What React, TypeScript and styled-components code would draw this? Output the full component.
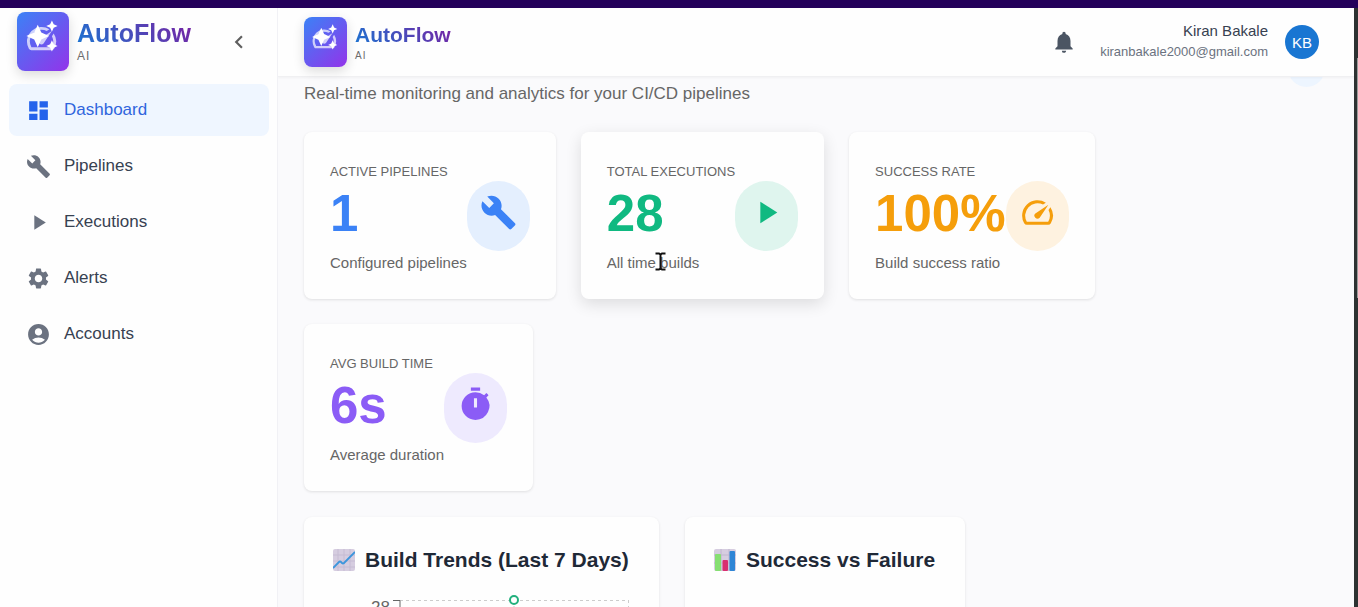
import React from "react";
import styled, { createGlobalStyle, css } from "styled-components";
import {
  MdAccountCircle,
  MdAutoAwesome,
  MdBuild,
  MdChevronLeft,
  MdDashboard,
  MdNotifications,
  MdPlayArrow,
  MdSettings,
  MdSpeed,
  MdTimer,
} from "react-icons/md";

const GlobalStyle = createGlobalStyle`
  *, *::before, *::after { box-sizing: border-box; }
  body {
    margin: 0;
    background: #fafafc;
    color: #1f2937;
    font-family: "Liberation Sans", Arial, sans-serif;
  }
  h1, h2, p { margin: 0; }
  button { font: inherit; }
`;

const Frame = styled.div`
  height: 100vh;
  overflow: hidden;
  display: flex;
  flex-direction: column;
  border-top: 8px solid #24005a;
`;

const Shell = styled.div`
  flex: 1;
  min-height: 0;
  display: flex;
`;

const ScrollTrack = styled.div`
  width: 4px;
  flex: none;
  padding: 50px 0 0 3px;
  background: #2d3232;
`;

const ScrollThumb = styled.div`
  height: 240px;
  background: #9b9b9b;
`;

const Sidebar = styled.aside`
  width: 278px;
  flex: none;
  background: #fefefe;
  border-right: 1px solid #f1f1f5;
`;

const SidebarTop = styled.div`
  height: 76px;
  padding: 4px 25px 13px 17px;
  display: flex;
  align-items: center;
  justify-content: space-between;
`;

const Brand = styled.div`
  display: flex;
  align-items: center;
  gap: 8px;
`;

const LogoBox = styled.div<{ $large?: boolean }>`
  width: ${(p) => (p.$large ? 52 : 43)}px;
  height: ${(p) => (p.$large ? 59 : 50)}px;
  padding: ${(p) => (p.$large ? "8px 8px 0" : "7px 7px 0")};
  border-radius: 8px;
  background: linear-gradient(135deg, #3b82f6, #9333ea);
  box-shadow: 0 4px 12px rgba(0, 0, 0, 0.14);

  > svg { display: block; width: 100%; }
`;

const BrandText = styled.div<{ $large?: boolean }>`
  padding: ${(p) => (p.$large ? "0 0 2px" : "2px 0 0")};
`;

const BrandName = styled.div<{ $large?: boolean }>`
  font-size: ${(p) => (p.$large ? 25 : 21)}px;
  line-height: ${(p) => (p.$large ? 30 : 26)}px;
  font-weight: 700;
  color: transparent;
  background: linear-gradient(45deg, #1976d2, #7b1fa2);
  background-clip: text;
  -webkit-background-clip: text;
`;

const BrandTag = styled.div<{ $large?: boolean }>`
  font-size: ${(p) => (p.$large ? 12 : 10)}px;
  line-height: 16px;
  letter-spacing: 1px;
  color: #6b6b6b;
`;

const IconButton = styled.button`
  padding: 0;
  border: 0;
  background: none;
  color: #5f5f5f;
  cursor: pointer;

  svg { display: block; }
`;

const Nav = styled.nav`
  padding: 0 8px 0 9px;
  display: flex;
  flex-direction: column;
  gap: 4px;
`;

const NavLink = styled.a<{ $active?: boolean }>`
  height: 52px;
  padding: 0 17px;
  display: flex;
  align-items: center;
  gap: 13px;
  border-radius: 8px;
  font-size: 17px;
  text-decoration: none;
  color: #374151;

  svg { color: #6b7280; }

  ${(p) =>
    p.$active &&
    css`
      background: #eff6ff;
      color: #2f65dd;
      svg { color: #2563eb; }
    `}
`;

const Main = styled.main`
  flex: 1;
  min-width: 0;
  overflow: hidden;
`;

const Header = styled.header`
  position: relative;
  z-index: 1;
  height: 69px;
  padding: 0 35px 0 26px;
  display: flex;
  align-items: center;
  justify-content: space-between;
  background: #fefefe;
  border-bottom: 1px solid #f0f0f2;
  box-shadow: 0 1px 2px rgba(0, 0, 0, 0.04);
`;

const Account = styled.div`
  display: flex;
  align-items: center;
  gap: 17px;
`;

const BellButton = styled(IconButton)`
  margin-right: 6px;
  color: #4b5563;
`;

const Identity = styled.div`
  padding-bottom: 2px;
  text-align: right;
`;

const UserName = styled.div`
  font-size: 15px;
  line-height: 22px;
  color: #374151;
`;

const UserMail = styled.div`
  font-size: 13px;
  line-height: 20px;
  color: #6b7280;
`;

const Avatar = styled.div`
  width: 34px;
  height: 34px;
  border-radius: 50%;
  display: grid;
  place-items: center;
  background: #1976d2;
  color: #fff;
  font-size: 15px;
`;

const Content = styled.div`
  padding: 0 26px;
  display: flex;
  flex-direction: column;
  gap: 26px;
`;

const PageHead = styled.div`
  margin-top: -27px;
  height: 56px;
  padding-right: 3px;
  display: flex;
  justify-content: space-between;
  align-items: flex-start;
`;

const Subtitle = styled.p`
  align-self: flex-end;
  font-size: 17px;
  line-height: 24px;
  color: #666;
`;

const RefreshButton = styled.button`
  width: 37px;
  height: 37px;
  border: 0;
  border-radius: 50%;
  background: #edf5ff;
`;

const CardRow = styled.section`
  display: flex;
  flex-wrap: wrap;
  align-items: flex-start;
  gap: 25px;
`;

const ChartRow = styled(CardRow)`
  gap: 26px;
`;

const Card = styled.article<{ $raised?: boolean }>`
  padding: 26px;
  border-radius: 8px;
  background: #fefefe;
  box-shadow: ${(p) =>
    p.$raised
      ? "0 5px 16px rgba(0, 0, 0, 0.12)"
      : "0 1px 3px rgba(0, 0, 0, 0.11)"};
`;

const StatCard = styled(Card)`
  display: flex;
  align-items: center;
`;

const StatLabel = styled.div`
  font-size: 13px;
  line-height: 27px;
  color: #666;
`;

const StatValue = styled.div<{ $color: string }>`
  font-size: 51px;
  line-height: 58px;
  font-weight: 700;
  color: ${(p) => p.$color};
`;

const StatNote = styled.div`
  position: relative;
  margin-top: 9px;
  font-size: 15px;
  line-height: 21px;
  color: #666;
`;

const StatIcon = styled.div<{ $color: string; $tint: string }>`
  margin-left: auto;
  padding: 13px 13px 20px;
  border-radius: 32px;
  color: ${(p) => p.$color};
  background: ${(p) => p.$tint};

  svg { display: block; }
`;

const TextCursor = styled.svg`
  position: absolute;
  left: 48px;
  top: 0;
`;

const ChartCard = styled(Card)`
  height: 400px;
`;

const ChartTitle = styled.h2`
  padding: 0 4px 0 3px;
  display: flex;
  align-items: center;
  gap: 10px;
  font-size: 21px;
  line-height: 34px;
  font-weight: 700;
  color: #1f2937;
`;

const Plot = styled.svg`
  display: block;
  margin-top: 13px;
`;

function LogoMark() {
  return (
    <svg viewBox="0 0 36 36" aria-hidden="true" color="#fff">
      <MdSpeed x={-1} y={1} size={35} opacity={0.7} />
      <MdAutoAwesome x={0} y={-1} size={34} />
    </svg>
  );
}

function TrendGlyph() {
  return (
    <svg width="22" height="22" viewBox="0 0 22 22" aria-hidden="true">
      <rect width="22" height="22" rx="2" fill="#d6cde0" />
      <path d="M0 6H22M0 12H22M0 18H22M5 0V22M11 0V22M17 0V22" stroke="#c6bcd3" strokeWidth="1" />
      <path d="M0 19 L6 13 Q7 12 8 13 L9 14 Q10 15 11 14 L22 3" fill="none" stroke="#3d96dc" strokeWidth="1.8" />
    </svg>
  );
}

function BarsGlyph() {
  return (
    <svg width="22" height="22" viewBox="0 0 22 22" aria-hidden="true">
      <rect width="22" height="22" rx="2" fill="#d6cde0" />
      <path d="M0 6H22M0 14H22M7 0V22M15 0V22" stroke="#c0b6ce" strokeWidth="1" />
      <rect x="1" y="5" width="6" height="17" rx="1" fill="#86df72" />
      <rect x="8.5" y="11" width="5.5" height="11" rx="1" fill="#d92f70" />
      <rect x="15.5" y="2" width="5.5" height="20" rx="1" fill="#2f86d6" />
    </svg>
  );
}

const navItems = [
  { label: "Dashboard", icon: MdDashboard },
  { label: "Pipelines", icon: MdBuild },
  { label: "Executions", icon: MdPlayArrow },
  { label: "Alerts", icon: MdSettings },
  { label: "Accounts", icon: MdAccountCircle },
];

const stats = [
  { label: "ACTIVE PIPELINES", value: "1", note: "Configured pipelines", icon: MdBuild, color: "#3b82f6", tint: "#e4effe" },
  { label: "TOTAL EXECUTIONS", value: "28", note: "All time builds", icon: MdPlayArrow, color: "#10b981", tint: "#dff5ee", hovered: true },
  { label: "SUCCESS RATE", value: "100%", note: "Build success ratio", icon: MdSpeed, color: "#f59e0b", tint: "#fef2e0" },
  { label: "AVG BUILD TIME", value: "6s", note: "Average duration", icon: MdTimer, color: "#8b5cf6", tint: "#eeeafe" },
];

export default function App() {
  return (
    <Frame>
      <GlobalStyle />
      <Shell>
        <Sidebar>
          <SidebarTop>
            <Brand>
              <LogoBox $large>
                <LogoMark />
              </LogoBox>
              <BrandText $large>
                <BrandName $large>AutoFlow</BrandName>
                <BrandTag $large>AI</BrandTag>
              </BrandText>
            </Brand>
            <IconButton aria-label="Collapse sidebar">
              <MdChevronLeft size={26} />
            </IconButton>
          </SidebarTop>
          <Nav>
            {navItems.map(({ label, icon: Icon }, i) => (
              <NavLink key={label} href="#" $active={i === 0}>
                <Icon size={25} />
                {label}
              </NavLink>
            ))}
          </Nav>
        </Sidebar>

        <Main>
          <Header>
            <Brand>
              <LogoBox>
                <LogoMark />
              </LogoBox>
              <BrandText>
                <BrandName>AutoFlow</BrandName>
                <BrandTag>AI</BrandTag>
              </BrandText>
            </Brand>
            <Account>
              <BellButton aria-label="Notifications">
                <MdNotifications size={26} />
              </BellButton>
              <Identity>
                <UserName>Kiran Bakale</UserName>
                <UserMail>kiranbakale2000@gmail.com</UserMail>
              </Identity>
              <Avatar>KB</Avatar>
            </Account>
          </Header>

          <Content>
            <PageHead>
              <Subtitle>Real-time monitoring and analytics for your CI/CD pipelines</Subtitle>
              <RefreshButton aria-label="Refresh" />
            </PageHead>

            <CardRow>
              {stats.map(({ label, value, note, icon: Icon, color, tint, hovered }) => (
                <StatCard key={label} $raised={hovered}>
                  <div>
                    <StatLabel>{label}</StatLabel>
                    <StatValue $color={color}>{value}</StatValue>
                    <StatNote>
                      {note}
                      {hovered && (
                        <TextCursor width="11" height="19" viewBox="0 0 11 19" aria-hidden="true">
                          <path d="M0.5 1.5H4L5.5 2.5L7 1.5H10.5M5.5 2V17M0.5 17.5H4L5.5 16.5L7 17.5H10.5" fill="none" stroke="#111" strokeWidth="2" />
                        </TextCursor>
                      )}
                    </StatNote>
                  </div>
                  <StatIcon $color={color} $tint={tint}>
                    <Icon size={37} />
                  </StatIcon>
                </StatCard>
              ))}
            </CardRow>

            <ChartRow>
              <ChartCard>
                <ChartTitle>
                  <TrendGlyph />
                  Build Trends (Last 7 Days)
                </ChartTitle>
                <Plot width="303" height="240" viewBox="0 0 303 240" role="img" aria-label="Build trends chart">
                  <path d="M70 10.5H299M298.5 10V230M184 10V230" fill="none" stroke="#ccc" strokeDasharray="3 3" />
                  <path d="M63 10.5H70V230" fill="none" stroke="#666" />
                  <text x="60" y="23" textAnchor="end" fontSize="17" fill="#666">28</text>
                  <circle cx="184" cy="10" r="4" fill="#fff" stroke="#22b07d" strokeWidth="2" />
                </Plot>
              </ChartCard>
              <ChartCard>
                <ChartTitle>
                  <BarsGlyph />
                  Success vs Failure
                </ChartTitle>
              </ChartCard>
            </ChartRow>
          </Content>
        </Main>
        <ScrollTrack>
          <ScrollThumb />
        </ScrollTrack>
      </Shell>
    </Frame>
  );
}
